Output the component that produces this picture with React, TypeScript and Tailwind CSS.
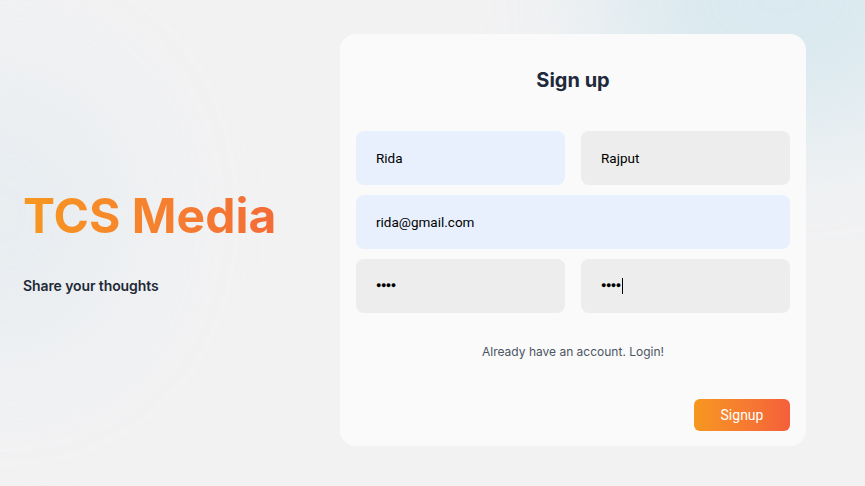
export default function App() {
  return (
    <div className="relative h-[486px] w-[865px] overflow-hidden bg-[#f2f2f3] font-['Inter',sans-serif]">
      <div className="pointer-events-none absolute -right-24 -top-32 h-[260px] w-[360px] rounded-full bg-[#cfe6ee] opacity-70 blur-[60px]" />
      <div className="pointer-events-none absolute -left-32 top-16 h-[300px] w-[260px] rounded-full bg-[#e6ecf0] opacity-80 blur-[60px]" />
      <div className="relative flex h-full items-start pt-[34px]">
        <div className="flex w-[340px] flex-col pl-[23px] pt-[154px]">
          <h1 className="bg-gradient-to-r from-[#f7971e] to-[#f25f3a] bg-clip-text text-[48px] font-bold leading-[56px] text-transparent">
            TCS Media
          </h1>
          <p className="mt-[31px] text-[14px] font-semibold tracking-[-0.1px] text-[#1f2937]">Share your thoughts</p>
        </div>
        <div className="flex h-[412px] w-[466px] flex-col rounded-[16px] bg-[#fafafa] px-[16px] pt-[32px] pb-[15px]">
          <h2 className="text-center text-[20px] font-bold leading-[28px] text-[#1e293b]">Sign up</h2>
          <div className="mt-[37px] flex flex-col gap-[10px] font-['Roboto',sans-serif] text-[13.5px] text-black">
            <div className="grid grid-cols-2 gap-[16px]">
              <div className="flex h-[54px] items-center rounded-[8px] bg-[#e8f0fe] px-[20px]">Rida</div>
              <div className="flex h-[54px] items-center rounded-[8px] bg-[#ededed] px-[20px]">Rajput</div>
            </div>
            <div className="flex h-[54px] items-center rounded-[8px] bg-[#e8f0fe] px-[20px]">rida@gmail.com</div>
            <div className="grid grid-cols-2 gap-[16px]">
              <div className="flex h-[54px] items-center rounded-[8px] bg-[#ededed] px-[20px] text-[9px] tracking-[-0.5px]">●●●●</div>
              <div className="flex h-[54px] items-center rounded-[8px] bg-[#ededed] px-[20px] text-[9px] tracking-[-0.5px]">
                ●●●●<span className="ml-[1px] inline-block h-[16px] w-[1px] bg-black" />
              </div>
            </div>
          </div>
          <p className="mt-[30px] text-center text-[12px] text-[#4b5563]">Already have an account. Login!</p>
          <div className="mt-auto flex justify-end">
            <button className="h-[32px] w-[96px] rounded-[6px] bg-gradient-to-r from-[#f7971e] to-[#f45f3a] font-['Roboto',sans-serif] text-[14px] font-normal text-white">
              Signup
            </button>
          </div>
        </div>
      </div>
    </div>
  );
}
